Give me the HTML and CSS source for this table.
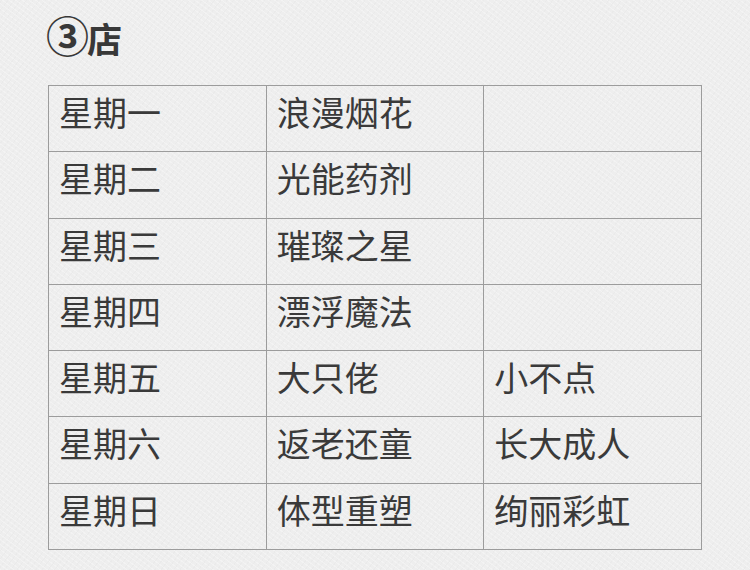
FILE: index.html
```html
<!DOCTYPE html>
<html lang="zh">
<head>
<meta charset="utf-8">
<link rel="stylesheet" href="styles.css">
</head>
<body>
<div class="page">
  <h1 class="title"><span class="num">③</span>店</h1>
  <div class="grid">
    <div class="cell">星期一</div><div class="cell">浪漫烟花</div><div class="cell"></div>
    <div class="cell">星期二</div><div class="cell">光能药剂</div><div class="cell"></div>
    <div class="cell">星期三</div><div class="cell">璀璨之星</div><div class="cell"></div>
    <div class="cell">星期四</div><div class="cell">漂浮魔法</div><div class="cell"></div>
    <div class="cell">星期五</div><div class="cell">大只佬</div><div class="cell">小不点</div>
    <div class="cell">星期六</div><div class="cell">返老还童</div><div class="cell">长大成人</div>
    <div class="cell">星期日</div><div class="cell">体型重塑</div><div class="cell">绚丽彩虹</div>
  </div>
</div>
</body>
</html>
```
FILE: styles.css
```css
html, body {
  margin: 0;
  padding: 0;
}
body {
  width: 750px;
  height: 570px;
  overflow: hidden;
  background-color: #eeeeee;
  background-image:
    repeating-linear-gradient(37deg, rgba(255,255,255,0.3) 0 1px, transparent 1px 4px),
    repeating-linear-gradient(-53deg, rgba(0,0,0,0.015) 0 1px, transparent 1px 5px);
  font-family: "Noto Sans CJK SC", "Noto Sans", sans-serif;
  color: #3a3a3a;
}
.page {
  padding: 13px 0 0 46px;
}
.title {
  margin: 0;
  font-size: 35px;
  line-height: 42px;
  font-weight: 700;
  color: #383838;
  display: flex;
  align-items: baseline;
}
.num {
  font-size: 43px;
  margin-right: -2px;
}
.grid {
  margin: 26px 0 0 2px;
  width: 653px;
  height: 464px;
  display: grid;
  grid-template-columns: repeat(3, 1fr);
  grid-template-rows: repeat(7, 1fr);
  border-top: 1px solid #9c9c9c;
  border-left: 1px solid #9c9c9c;
}
.cell {
  border-right: 1px solid #9c9c9c;
  border-bottom: 1px solid #9c9c9c;
  padding: 9px 0 0 10px;
  font-size: 34px;
  line-height: 34px;
}
```
